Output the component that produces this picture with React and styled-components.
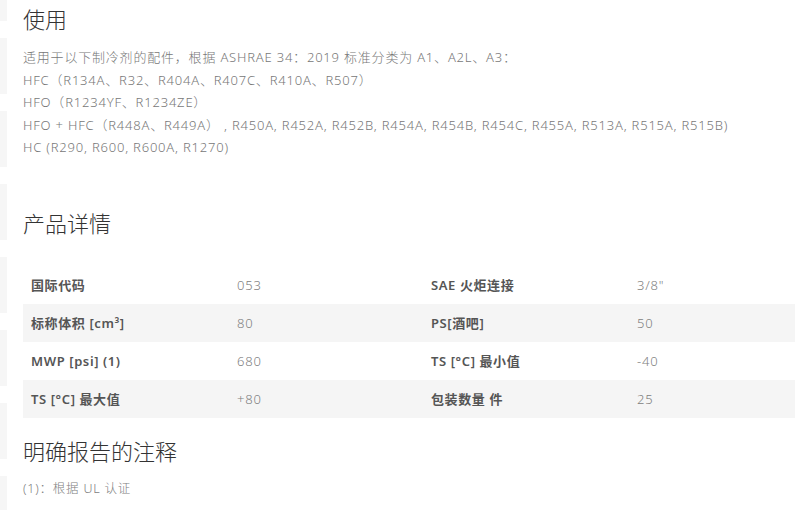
import React from 'react';
import styled, { createGlobalStyle } from 'styled-components';

const GlobalStyle = createGlobalStyle`
  html, body {
    margin: 0;
    padding: 0;
    background: #fff;
  }

  body {
    font-family: "Noto Sans", "Noto Sans CJK SC", sans-serif;
    color: #333;
  }
`;

const Page = styled.div`
  display: flex;
  width: 795px;
  height: 510px;
  overflow: hidden;
`;

// faint segmented strip along the left edge
const Rail = styled.div`
  flex: 0 0 7px;
  margin-top: -35px;
  background: repeating-linear-gradient(
    to bottom,
    #f6f6f6 0px,
    #f6f6f6 56px,
    #ffffff 56px,
    #ffffff 73px
  );
`;

const Main = styled.main`
  flex: 1;
  padding-left: 16px;
`;

const Heading = styled.h2`
  margin: 0;
  font-size: 22px;
  font-weight: 300;
  line-height: 30px;
  color: #333;
  padding-top: ${(p) => p.$top || 0}px;
`;

const Usage = styled.div`
  margin-top: 12px;
  font-size: 13px;
  line-height: 22.5px;
  letter-spacing: 0.8px;
  color: #777;
  font-weight: 300;
`;

const Table = styled.div`
  margin-top: 28px;
  display: grid;
  grid-template-columns: 200px 200px 200px 1fr;
`;

const Row = styled.div`
  display: contents;

  & > div {
    background: ${(p) => (p.$shaded ? '#f5f5f5' : '#fff')};
  }
`;

const Label = styled.div`
  height: 38px;
  display: flex;
  align-items: center;
  padding-left: 8px;
  font-size: 13px;
  font-weight: 600;
  letter-spacing: 0.6px;
  color: #555;
`;

const Value = styled.div`
  height: 38px;
  display: flex;
  align-items: center;
  padding-left: 14px;
  font-size: 13px;
  font-weight: 300;
  letter-spacing: 0.8px;
  color: #808080;
`;

const Note = styled.p`
  margin: 12px 0 0;
  font-size: 12.5px;
  font-weight: 300;
  letter-spacing: 0.8px;
  color: #808080;
`;

const rows = [
  ['国际代码', '053', 'SAE 火炬连接', '3/8"'],
  ['标称体积 [cm³]', '80', 'PS[酒吧]', '50'],
  ['MWP [psi] (1)', '680', 'TS [°C] 最小值', '-40'],
  ['TS [°C] 最大值', '+80', '包装数量 件', '25'],
];

const App = () => (
  <Page>
    <GlobalStyle />
    <Rail />
    <Main>
      <Heading $top={4}>使用</Heading>
      <Usage>
        适用于以下制冷剂的配件，根据 ASHRAE 34：2019 标准分类为 A1、A2L、A3：<br />
        HFC（R134A、R32、R404A、R407C、R410A、R507）<br />
        HFO（R1234YF、R1234ZE）<br />
        HFO + HFC（R448A、R449A） , R450A, R452A, R452B, R454A, R454B, R454C, R455A, R513A, R515A, R515B)<br />
        HC (R290, R600, R600A, R1270)
      </Usage>
      <Heading $top={49}>产品详情</Heading>
      <Table>
        {rows.map((r, i) => (
          <Row key={r[0]} $shaded={i % 2 === 1}>
            <Label>{r[0]}</Label>
            <Value>{r[1]}</Value>
            <Label>{r[2]}</Label>
            <Value>{r[3]}</Value>
          </Row>
        ))}
      </Table>
      <Heading $top={18}>明确报告的注释</Heading>
      <Note>(1)：根据 UL 认证</Note>
    </Main>
  </Page>
);

export default App;
